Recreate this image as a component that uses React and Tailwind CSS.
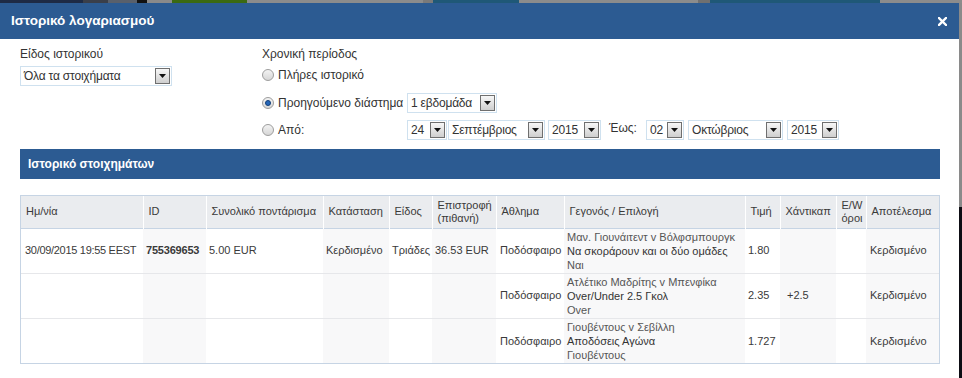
import React from "react";

function Arrow() {
  return (
    <div className="w-[15px] h-[16px] border border-[#6f6f6f] bg-gradient-to-b from-[#f7f7f7] to-[#cfcfcf] flex items-center justify-center shrink-0">
      <svg width="7" height="4" viewBox="0 0 7 4"><path d="M0 0H7L3.5 4Z" fill="#111" /></svg>
    </div>
  );
}

function Select({ w, text }) {
  return (
    <div className={`${w} h-[20px] border border-[#cfe1ef] bg-white flex items-center justify-between pl-[3px] pr-[1px] shrink-0`}>
      <span className="text-[12px] text-[#333] leading-none whitespace-nowrap tracking-[-0.2px]">{text}</span>
      <Arrow />
    </div>
  );
}

function Radio({ checked }) {
  return (
    <span className="w-[12px] h-[12px] rounded-full border border-[#9d9d9d] bg-gradient-to-b from-[#f3f3f3] to-[#d6d6d6] flex items-center justify-center shrink-0">
      {checked && <span className="w-[6px] h-[6px] rounded-full bg-[#2466b8] border border-[#123f78]" />}
    </span>
  );
}

const cols = [122, 63, 117, 66, 43, 64, 68, 181, 35, 56, 30, 73];

const headers = [
  ["Ημ/νία"],
  ["ID"],
  ["Συνολικό ποντάρισμα"],
  ["Κατάσταση"],
  ["Είδος"],
  ["Επιστροφή", "(πιθανή)"],
  ["Άθλημα"],
  ["Γεγονός / Επιλογή"],
  ["Τιμή"],
  ["Χάντικαπ"],
  ["E/W", "όροι"],
  ["Αποτέλεσμα"],
];

const rows = [
  ["30/09/2015 19:55 EEST", "755369653", "5.00 EUR", "Κερδισμένο", "Τριάδες", "36.53 EUR", "Ποδόσφαιρο", ["Μαν. Γιουνάιτεντ v Βόλφσμπουργκ", "Να σκοράρουν και οι δύο ομάδες", "Ναι"], "1.80", "", "", "Κερδισμένο"],
  ["", "", "", "", "", "", "Ποδόσφαιρο", ["Ατλέτικο Μαδρίτης v Μπενφίκα", "Over/Under 2.5 Γκολ", "Over"], "2.35", "+2.5", "", "Κερδισμένο"],
  ["", "", "", "", "", "", "Ποδόσφαιρο", ["Γιουβέντους v Σεβίλλη", "Αποδόσεις Αγώνα", "Γιουβέντους"], "1.727", "", "", "Κερδισμένο"],
];

export default function App() {
  return (
    <div className="w-[962px] h-[378px] overflow-hidden bg-white flex flex-col font-['Liberation_Sans',Arial,sans-serif]">
      <div className="h-[3px] flex shrink-0">
        <div className="w-[83px] bg-[#1e2b45]" />
        <div className="w-[25px] bg-[#3a3f4a]" />
        <div className="w-[29px] bg-[#59606b]" />
        <div className="w-[10px] bg-[#111111]" />
        <div className="w-[25px] bg-[#8a8a8a]" />
        <div className="w-[75px] bg-[#3b6a12]" />
        <div className="w-[176px] bg-[#8c8c8c]" />
        <div className="w-[10px] bg-[#7a7a7a]" />
        <div className="w-[86px] bg-[#1f5877]" />
        <div className="w-[179px] bg-[#8c8c8c]" />
        <div className="w-[12px] bg-[#707070]" />
        <div className="w-[170px] bg-[#1f5877]" />
        <div className="flex-1 bg-[#8c8c8c]" />
      </div>
      <div className="flex flex-1">
        <div className="w-[959px] flex flex-col">
          <div className="h-[36px] bg-[#2c5b92] flex items-center justify-between pl-[11px] pr-[12px]">
            <span className="text-white text-[13.5px] font-bold">Ιστορικό λογαριασμού</span>
            <svg width="9" height="9" viewBox="0 0 9 9"><path d="M1 1L8 8M8 1L1 8" stroke="white" strokeWidth="2.4" strokeLinecap="square" /></svg>
          </div>
          <div className="flex-1 bg-white pl-[20px] pt-[8px] text-[#333]">
            <div className="flex">
              <div className="w-[242px] flex flex-col">
                <div className="text-[12px] leading-[14px]">Είδος ιστορικού</div>
                <div className="mt-[5px]"><Select w="w-[152px]" text="Όλα τα στοιχήματα" /></div>
              </div>
              <div className="flex flex-col">
                <div className="text-[12px] leading-[14px]">Χρονική περίοδος</div>
                <div className="mt-[4px] h-[20px] flex items-center">
                  <Radio />
                  <span className="ml-[4px] text-[12px]">Πλήρες ιστορικό</span>
                </div>
                <div className="mt-[8px] h-[20px] flex items-center">
                  <div className="w-[145px] flex items-center">
                    <Radio checked />
                    <span className="ml-[4px] text-[12px] whitespace-nowrap">Προηγούμενο διάστημα</span>
                  </div>
                  <Select w="w-[90px]" text="1 εβδομάδα" />
                </div>
                <div className="mt-[7px] h-[20px] flex items-center">
                  <div className="w-[145px] flex items-center">
                    <Radio />
                    <span className="ml-[4px] text-[12px]">Από:</span>
                  </div>
                  <Select w="w-[40px]" text="24" />
                  <div className="ml-[1px]"><Select w="w-[97px]" text="Σεπτέμβριος" /></div>
                  <div className="ml-[3px]"><Select w="w-[53px]" text="2015" /></div>
                  <span className="ml-[8px] w-[37px] text-[12px] self-start leading-[16px]">Έως:</span>
                  <Select w="w-[38px]" text="02" />
                  <div className="ml-[4px]"><Select w="w-[95px]" text="Οκτώβριος" /></div>
                  <div className="ml-[4px]"><Select w="w-[52px]" text="2015" /></div>
                </div>
              </div>
            </div>
            <div className="mt-[9px] w-[920px] h-[30px] bg-[#2c5b92] flex items-center pl-[8px]">
              <span className="text-white text-[12px] font-bold">Ιστορικό στοιχημάτων</span>
            </div>
            <div className="mt-[16px] w-[920px] border border-[#c6d4e4]">
              <table className="table-fixed border-collapse w-[918px] text-[11px] text-[#3a3a3a]">
                <colgroup>
                  {cols.map((c, i) => (
                    <col key={i} style={{ width: c }} />
                  ))}
                </colgroup>
                <thead>
                  <tr className="h-[32px] bg-[#eaecef] border-b border-[#c6d4e4]">
                    {headers.map((h, i) => (
                      <th key={i} className={`text-left font-normal align-middle pl-[5px] pr-0 leading-[13px] ${i > 0 ? "border-l border-white" : ""}`}>
                        {h.map((l, j) => (
                          <div key={j} className="whitespace-nowrap">{l}</div>
                        ))}
                      </th>
                    ))}
                  </tr>
                </thead>
                <tbody>
                  {rows.map((r, ri) => (
                    <tr key={ri} className={`h-[45px] ${ri > 0 ? "border-t border-[#e6e7ea]" : ""}`}>
                      {r.map((c, ci) => (
                        <td
                          key={ci}
                          className={`align-middle p-0 ${ci === 9 ? "pl-[7px]" : ci === 0 || ci === 6 || ci === 11 ? "pl-[4px]" : "pl-[3px]"} ${ci % 2 === 1 ? "bg-[#f8f8f9]" : "bg-white"}`}
                        >
                          {Array.isArray(c) ? (
                            <div className="leading-[14px]">
                              <div className="text-[#555] whitespace-nowrap">{c[0]}</div>
                              <div className="text-[#333] whitespace-nowrap">{c[1]}</div>
                              <div className="text-[#555] whitespace-nowrap">{c[2]}</div>
                            </div>
                          ) : (
                            <span className={`whitespace-nowrap ${ci === 1 ? "font-bold tracking-[-0.2px]" : ""} ${ci === 0 ? "tracking-[-0.3px]" : ""}`}>{c}</span>
                          )}
                        </td>
                      ))}
                    </tr>
                  ))}
                </tbody>
              </table>
            </div>
          </div>
        </div>
        <div className="w-[3px] flex flex-col">
          <div className="h-[204px] bg-[#8a8a8a]" />
          <div className="flex-1 bg-[#0d0d14]" />
        </div>
      </div>
    </div>
  );
}
